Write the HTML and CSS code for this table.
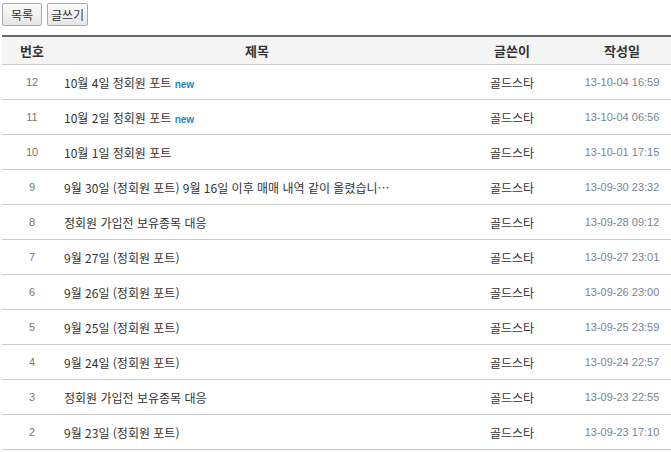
FILE: index.html
```html
<!DOCTYPE html>
<html lang="ko">
<head>
<meta charset="utf-8">
<link rel="stylesheet" href="styles.css">
</head>
<body>
<div class="page">
  <div class="toolbar">
    <button class="btn">목록</button>
    <button class="btn">글쓰기</button>
  </div>
  <table class="board">
    <colgroup>
      <col class="c-num"><col class="c-title"><col class="c-writer"><col class="c-date">
    </colgroup>
    <thead>
      <tr><th>번호</th><th>제목</th><th>글쓴이</th><th>작성일</th></tr>
    </thead>
    <tbody>
      <tr><td class="num">12</td><td class="title">10월 4일 정회원 포트 <span class="new">new</span></td><td class="writer">골드스타</td><td class="date">13-10-04 16:59</td></tr>
      <tr><td class="num">11</td><td class="title">10월 2일 정회원 포트 <span class="new">new</span></td><td class="writer">골드스타</td><td class="date">13-10-04 06:56</td></tr>
      <tr><td class="num">10</td><td class="title">10월 1일 정회원 포트</td><td class="writer">골드스타</td><td class="date">13-10-01 17:15</td></tr>
      <tr><td class="num">9</td><td class="title">9월 30일 (정회원 포트) 9월 16일 이후 매매 내역 같이 올렸습니…</td><td class="writer">골드스타</td><td class="date">13-09-30 23:32</td></tr>
      <tr><td class="num">8</td><td class="title">정회원 가입전 보유종목 대응</td><td class="writer">골드스타</td><td class="date">13-09-28 09:12</td></tr>
      <tr><td class="num">7</td><td class="title">9월 27일 (정회원 포트)</td><td class="writer">골드스타</td><td class="date">13-09-27 23:01</td></tr>
      <tr><td class="num">6</td><td class="title">9월 26일 (정회원 포트)</td><td class="writer">골드스타</td><td class="date">13-09-26 23:00</td></tr>
      <tr><td class="num">5</td><td class="title">9월 25일 (정회원 포트)</td><td class="writer">골드스타</td><td class="date">13-09-25 23:59</td></tr>
      <tr><td class="num">4</td><td class="title">9월 24일 (정회원 포트)</td><td class="writer">골드스타</td><td class="date">13-09-24 22:57</td></tr>
      <tr><td class="num">3</td><td class="title">정회원 가입전 보유종목 대응</td><td class="writer">골드스타</td><td class="date">13-09-23 22:55</td></tr>
      <tr><td class="num">2</td><td class="title">9월 23일 (정회원 포트)</td><td class="writer">골드스타</td><td class="date">13-09-23 17:10</td></tr>
    </tbody>
  </table>
</div>
</body>
</html>
```

FILE: styles.css
```css
html, body {
  margin: 0;
  padding: 0;
  background: #fff;
}
body {
  font-family: "Noto Sans CJK KR", "Noto Sans", sans-serif;
  font-size: 12px;
  color: #333;
  overflow: hidden;
}
.page {
  padding: 3px 0 0 2px;
}
.toolbar {
  display: flex;
  gap: 5px;
  height: 22px;
}
.btn {
  font-family: "Noto Sans CJK KR", sans-serif;
  font-size: 12px;
  color: #333;
  height: 23px;
  padding: 0;
  border: 1px solid #a9a9a9;
  border-radius: 2px;
  background: linear-gradient(#fbfbfb, #e6e6e6);
  line-height: 20px;
  white-space: nowrap;
  text-align: center;
}
.btn:first-child { width: 40px; }
.btn:last-child { width: 41px; }
.board {
  margin-top: 10px;
  width: 670px;
  border-collapse: collapse;
  border-top: 2px solid #6a6a6a;
  table-layout: fixed;
}
.c-num { width: 60px; }
.c-title { width: 390px; }
.c-writer { width: 120px; }
.c-date { width: 100px; }
.board th {
  background: #f5f5f5;
  height: 27px;
  padding: 0;
  font-size: 13px;
  font-weight: bold;
  color: #333;
  border-bottom: 1px solid #cccccc;
  text-align: center;
}
.board td {
  height: 34px;
  padding: 0;
  border-bottom: 1px solid #cccccc;
  white-space: nowrap;
  overflow: hidden;
}
.num {
  text-align: center;
  font-family: "Liberation Sans", sans-serif;
  font-size: 11px;
  color: #777;
}
.title {
  padding-left: 2px !important;
  font-size: 12px;
  color: #333;
}
.writer {
  text-align: center;
  color: #333;
}
.date {
  text-align: center;
  font-family: "Liberation Sans", sans-serif;
  font-size: 11px;
  color: #7a8590;
}
.new {
  font-family: "Liberation Sans", sans-serif;
  font-size: 10px;
  font-weight: bold;
  color: #1a8ac6;
}
```
